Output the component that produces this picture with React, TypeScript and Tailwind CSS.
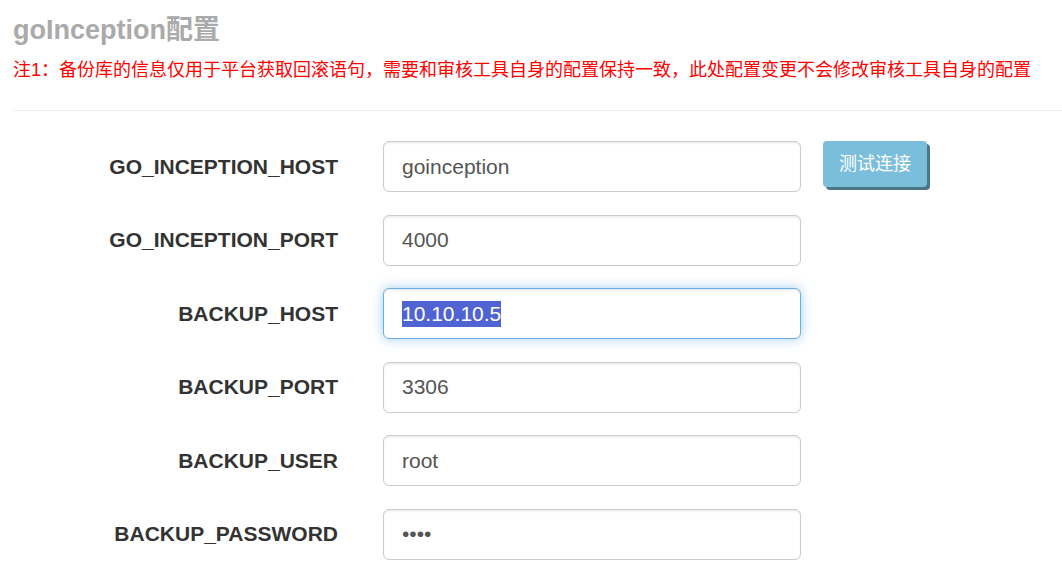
import React from "react";

const FONT = { fontFamily: '"Liberation Sans", Arial, "Noto Sans CJK SC", sans-serif' };

type Row = { label: string; value: string; kind?: "focus" | "password" };

const rows: Row[] = [
  { label: "GO_INCEPTION_HOST", value: "goinception" },
  { label: "GO_INCEPTION_PORT", value: "4000" },
  { label: "BACKUP_HOST", value: "10.10.10.5", kind: "focus" },
  { label: "BACKUP_PORT", value: "3306" },
  { label: "BACKUP_USER", value: "root" },
  { label: "BACKUP_PASSWORD", value: "••••", kind: "password" },
];

function Field({ row }: { row: Row }) {
  const focused = row.kind === "focus";
  return (
    <div
      className={
        "flex h-[51px] w-[418px] items-center rounded-[6px] border bg-white pl-[18px] text-[21px] text-[#555] " +
        (focused
          ? "border-[#66afe9] shadow-[inset_0_1.5px_1.5px_rgba(0,0,0,0.075),0_0_12px_rgba(102,175,233,0.6)]"
          : "border-[#ccc] shadow-[inset_0_1.5px_1.5px_rgba(0,0,0,0.075)]")
      }
    >
      {focused ? (
        <span className="inline-block bg-[#4f63d2] leading-[26px] text-white">{row.value}</span>
      ) : (
        <span className="leading-[26px]">{row.value}</span>
      )}
    </div>
  );
}

export default function App() {
  return (
    <div className="min-h-[575px] bg-white pl-[13px] pt-[15px]" style={FONT}>
      <h1 className="text-[27px] font-bold leading-[30px] text-[#aaa]">goInception配置</h1>
      <p className="mt-[12px] text-[18px] leading-[26px] text-[#ff0000]">
        注1：备份库的信息仅用于平台获取回滚语句，需要和审核工具自身的配置保持一致，此处配置变更不会修改审核工具自身的配置
      </p>
      <div className="mt-[27px] border-t border-[#eee]" />
      <div className="mt-[30px] flex flex-col gap-[22.5px]">
        {rows.map((row, i) => (
          <div key={row.label} className="flex items-start">
            <div className="flex h-[51px] w-[325px] items-center justify-end text-[21px] font-bold text-[#333]">
              {row.label}
            </div>
            <div className="ml-[45px]">
              <Field row={row} />
            </div>
            {i === 0 && (
              <button className="ml-[22px] flex h-[46px] w-[104px] items-center justify-center rounded-[4px] bg-[#7bbedb] text-[18px] text-white shadow-[3px_3px_0_#4a7686]">
                测试连接
              </button>
            )}
          </div>
        ))}
      </div>
    </div>
  );
}
